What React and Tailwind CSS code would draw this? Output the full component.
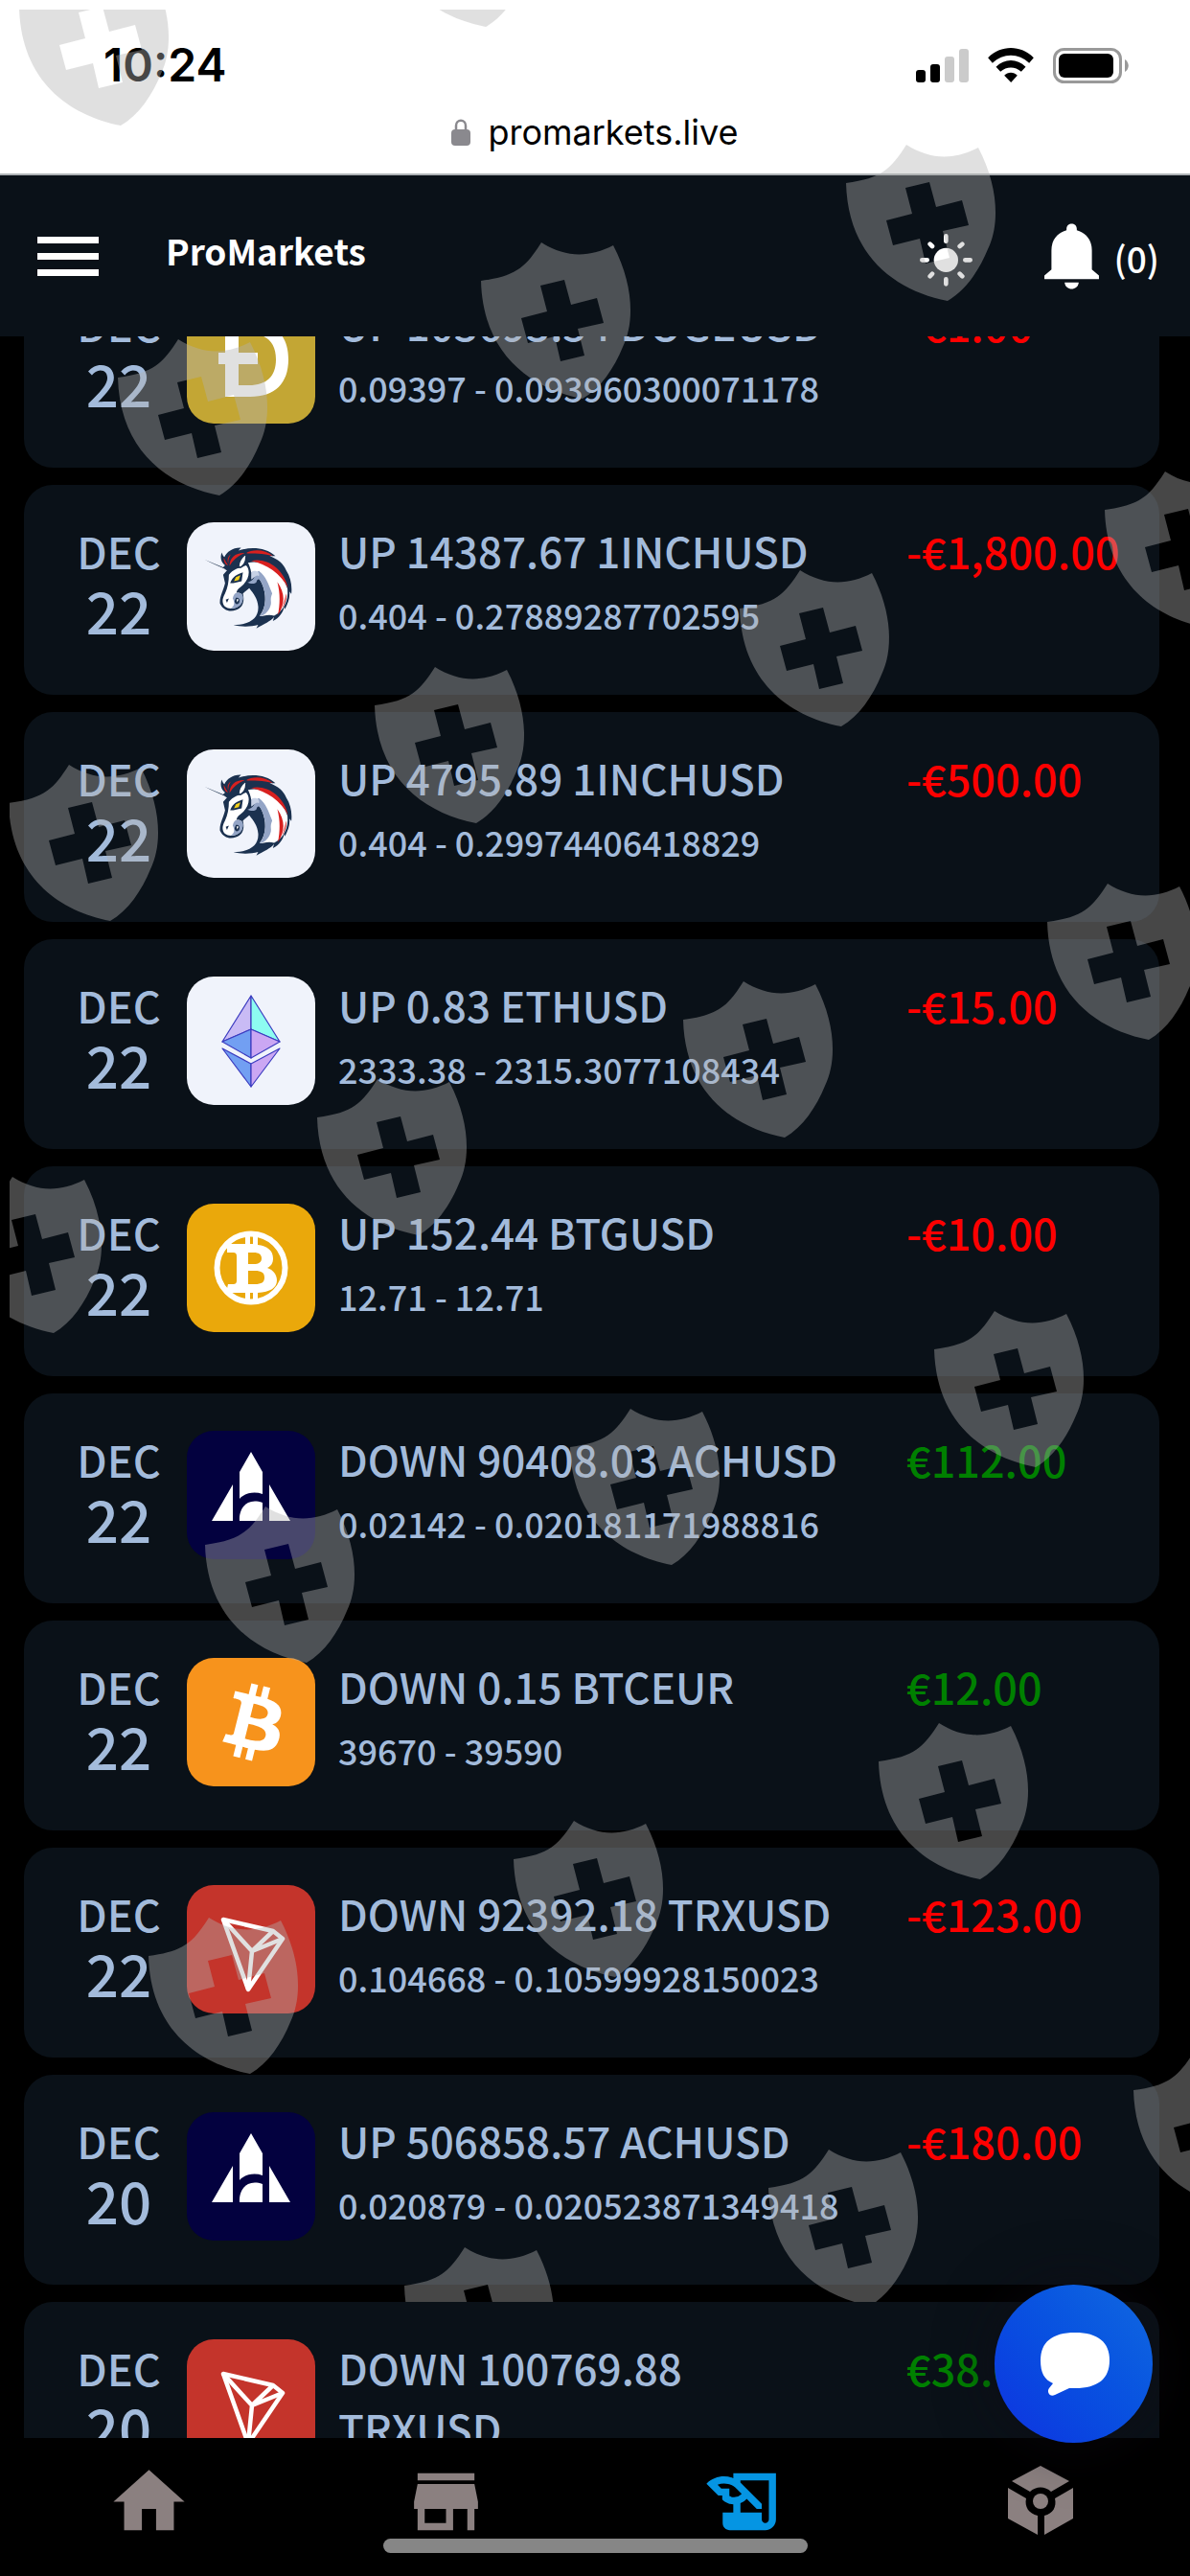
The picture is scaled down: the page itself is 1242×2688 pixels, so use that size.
// src/App.jsx
import React from "react";
import { MdHome, MdStore, MdHistoryEdu } from "react-icons/md";

const trades = [
  { month: "DEC", day: "22", coin: "doge", title: "UP 103693.54 DOGEUSD", range: "0.09397 - 0.093960300071178", amount: "-€1.00" },
  { month: "DEC", day: "22", coin: "1inch", title: "UP 14387.67 1INCHUSD", range: "0.404 - 0.27889287702595", amount: "-€1,800.00" },
  { month: "DEC", day: "22", coin: "1inch", title: "UP 4795.89 1INCHUSD", range: "0.404 - 0.29974406418829", amount: "-€500.00" },
  { month: "DEC", day: "22", coin: "eth", title: "UP 0.83 ETHUSD", range: "2333.38 - 2315.3077108434", amount: "-€15.00" },
  { month: "DEC", day: "22", coin: "btg", title: "UP 152.44 BTGUSD", range: "12.71 - 12.71", amount: "-€10.00" },
  { month: "DEC", day: "22", coin: "ach", title: "DOWN 90408.03 ACHUSD", range: "0.02142 - 0.020181171988816", amount: "€112.00" },
  { month: "DEC", day: "22", coin: "btc", title: "DOWN 0.15 BTCEUR", range: "39670 - 39590", amount: "€12.00" },
  { month: "DEC", day: "22", coin: "trx", title: "DOWN 92392.18 TRXUSD", range: "0.104668 - 0.10599928150023", amount: "-€123.00" },
  { month: "DEC", day: "20", coin: "ach", title: "UP 506858.57 ACHUSD", range: "0.020879 - 0.020523871349418", amount: "-€180.00" },
  { month: "DEC", day: "20", coin: "trx", title: "DOWN 100769.88 TRXUSD", range: "", amount: "€38.00" },
];

const tileColors = {
  doge: "bg-[#c3a634]",
  "1inch": "bg-[#f0f3fb]",
  eth: "bg-[#f0f3fb]",
  btg: "bg-[#eaa80b]",
  ach: "bg-[#03013f]",
  btc: "bg-[#f7931c]",
  trx: "bg-[#c4342b]",
};

function Unicorn() {
  return (
    <svg viewBox="14 15 403 403" className="size-full" aria-hidden="true">
      <path
        fill="#1b314f"
        d="M70 132L128 156L134 150C120 140 118 122 124 110C126 118 128 122 132 124C140 108 158 94 184 95L176 104C210 92 262 92 292 121L274 121C300 130 318 146 326 166C340 188 345 214 342 240L336 232C338 254 332 268 322 288L320 280C316 298 304 316 284 325L288 312C276 326 258 334 232 348L238 337C212 344 182 343 160 337C208 337 240 318 238 280C236 254 224 240 210 222L190 238C196 262 190 284 168 290C150 298 128 292 118 270C116 248 130 226 134 206L128 180L140 166Z"
      />
      <path fill="#fff" d="M86 140L130 160L140 168Z" />
      <path fill="#fff" d="M146 180C158 162 180 158 200 150C214 164 210 190 192 210C182 220 172 224 170 236C188 234 192 246 188 262C182 284 150 292 134 280C122 268 126 252 134 238C142 222 146 200 146 180Z" />
      <path fill="#94a5c6" d="M170 236C190 234 194 248 188 264C182 282 162 288 152 284C168 276 162 262 158 254C160 244 164 238 170 236Z" />
      <path fill="#fff" d="M206 142C262 130 314 172 330 224C334 262 316 294 288 308C268 302 254 310 242 310C266 280 264 238 248 204C238 184 228 172 216 172C214 160 210 150 206 142Z" />
      <path fill="#94a5c6" d="M240 168C264 186 268 206 282 238C272 262 284 262 274 284C262 306 250 308 242 310C262 286 266 244 250 208C244 194 236 186 232 204C226 210 212 208 204 204C214 202 228 194 230 174Z" />
      <path fill="#c8d2e6" d="M216 172C228 162 246 172 240 184C232 176 226 190 216 194Z" />
      <path fill="#d8201f" d="M216 136C262 124 318 158 332 222C310 176 264 146 216 136ZM298 202C324 238 322 274 300 306C306 272 308 240 298 202ZM326 238C328 256 322 270 314 284C320 266 322 252 326 238ZM198 113C222 98 260 100 284 121C252 112 224 114 198 113ZM148 152C148 126 166 110 196 111C174 120 160 132 148 152ZM130 126C134 134 138 142 144 150C134 148 130 138 130 126ZM152 116C142 122 140 134 144 144C144 130 148 122 152 116Z" />
      <path fill="#fff" stroke="#1b314f" strokeWidth="5" d="M176 156C176 138 186 124 200 114C202 134 196 148 184 156Z" />
      <path fill="#1b314f" d="M150 206C156 192 160 182 190 172L186 200L160 206Z" />
      <path fill="#f2cf1a" d="M162 200L168 187L182 181L177 196Z" />
      <path fill="#1b314f" d="M136 258L146 254L140 268ZM168 252C178 250 182 258 178 268C172 276 164 270 164 262Z" />
      <path fill="#fff" d="M170 256L177 257L172 266Z" />
    </svg>
  );
}

function CoinIcon({ coin }) {
  if (coin === "1inch") return <Unicorn />;
  if (coin === "btc") {
    return (
      <svg viewBox="-1 -0.5 33 33" className="size-full" fill="#fff" aria-hidden="true">
        <path d="M23.189 14.02c.314-2.096-1.283-3.223-3.465-3.975l.708-2.84-1.728-.43-.69 2.765c-.454-.114-.92-.22-1.385-.326l.695-2.783L15.596 6l-.708 2.839c-.376-.086-.746-.17-1.104-.26l.002-.009-2.384-.595-.46 1.846s1.283.294 1.256.312c.7.175.826.638.805 1.006l-.806 3.235c.048.012.11.03.18.057l-.183-.045-1.13 4.532c-.086.212-.303.531-.793.41.018.025-1.256-.313-1.256-.313l-.858 1.978 2.25.561c.418.105.828.215 1.231.318l-.715 2.872 1.727.43.708-2.84c.472.127.93.245 1.378.357l-.706 2.828 1.728.43.715-2.866c2.948.558 5.164.333 6.097-2.333.752-2.146-.037-3.385-1.588-4.192 1.13-.26 1.98-1.003 2.207-2.538zm-3.95 5.538c-.533 2.147-4.148.986-5.32.695l.95-3.805c1.172.293 4.929.872 4.37 3.11zm.535-5.569c-.487 1.953-3.495.96-4.47.717l.86-3.45c.975.243 4.118.696 3.61 2.733z" />
      </svg>
    );
  }
  return (
    <svg viewBox="0 0 134 134" className="size-full" aria-hidden="true">
      {coin === "doge" && (
        <path
          fill="#fff"
          fillRule="evenodd"
          d="M40 28H66C92 28 106 42 106 67C106 92 92 106 66 106H40V72H33V60H40ZM54 40V60H74V72H54V94H65C83 94 93 85 93 67C93 49 83 40 65 40Z"
        />
      )}
      {coin === "eth" && (
        <g stroke="#3c3cc0" strokeWidth="1.2" strokeLinejoin="round">
          <path fill="#c9bbf5" d="M67 20L37 68L67 55Z" />
          <path fill="#8dfcf1" d="M67 20L97 68L67 55Z" />
          <path fill="#729ff2" d="M67 55L37 68L67 85Z" />
          <path fill="#cba7f3" d="M67 55L97 68L67 85Z" />
          <path fill="#729ff2" d="M37 75L67 91V115Z" />
          <path fill="#cba7f3" d="M97 75L67 91V115Z" />
        </g>
      )}
      {coin === "btg" && (
        <g>
          <circle cx="67" cy="67" r="35.5" fill="none" stroke="#fff" strokeWidth="6" />
          <path
            fill="#fff"
            fillRule="evenodd"
            d="M42 42H61V34H66V42H69V34H74V43C84 44 90 49 90 57C90 62 88 65 84 67C90 69 94 74 94 80C94 88 87 92 74 93V101H69V93H66V101H61V93H41L43 84H48C51 84 52 83 52 80V55C52 52 51 51 48 51H42ZM64 51V63H70C75 63 78 61 78 57C78 53 75 51 70 51ZM64 70V84H71C78 84 81 82 81 77C81 72 78 70 71 70Z"
          />
        </g>
      )}
      {coin === "ach" && (
        <path
          fill="#fff"
          d="M67 22L79 43V66C70 63 60 65 55 71V43ZM48 56V94H26ZM86 56L108 94H86ZM55 94C54 82 62 69 79 75V94Z"
        />
      )}
      {coin === "trx" && (
        <g fill="none" stroke="#fff" strokeWidth="4.5" strokeLinejoin="round">
          <path d="M38 36L90 48L100 56L64 109Z" />
          <path d="M38 36L68 69L64 109M68 69L90 48M68 69L100 56" />
        </g>
      )}
    </svg>
  );
}

function TradeCard({ trade }) {
  const loss = trade.amount.startsWith("-");
  return (
    <li className="flex h-[219px] items-start rounded-[30px] bg-[#0a1118] pt-[37px] pl-12 text-[45px] font-medium text-[#a3bbdb]">
      <div className="w-[102px] shrink-0 text-center">
        <div className="leading-[63px]">{trade.month}</div>
        <div className="text-[60px] leading-[60px]">{trade.day}</div>
      </div>
      <div className={`mt-0.5 ml-5 size-[134px] shrink-0 overflow-hidden rounded-[28px] ${tileColors[trade.coin]}`}>
        <CoinIcon coin={trade.coin} />
      </div>
      <div className="ml-6 min-w-0 flex-1 pr-16">
        <div className="text-[44px] leading-[63px]">{trade.title}</div>
        <div className="mt-2 text-[36px] leading-[54px]">{trade.range}</div>
      </div>
      <div className={`w-[264px] shrink-0 whitespace-nowrap leading-[63px] ${loss ? "text-[#ff0000]" : "text-[#008000]"}`}>
        {trade.amount}
      </div>
    </li>
  );
}

function StatusBar() {
  return (
    <div className="h-[183px] shrink-0 border-b-2 border-[#aeb2b5] bg-white pt-10 font-['Inter',sans-serif] text-black">
      <div className="flex h-14 items-center justify-between pr-16 pl-[108px]">
        <span className="text-[48px] font-semibold">10:24</span>
        <div className="flex items-center gap-5">
          <svg viewBox="0 0 55 35" className="h-[35px] w-[55px]" aria-hidden="true">
            <rect y="22" width="10" height="13" rx="3" />
            <rect x="15" y="16" width="10" height="19" rx="3" />
            <rect x="30" y="8" width="10" height="27" rx="3" fill="#cbcbcb" />
            <rect x="45" width="10" height="35" rx="3" fill="#cbcbcb" />
          </svg>
          <svg viewBox="305 27 143 108" className="h-9 w-12" aria-hidden="true">
            <path d="M305 58C345 17 408 17 448 58L434 74C401 42 352 42 319 74ZM330 86C357 59 396 59 423 86L409 101C390 84 363 84 344 101ZM356 113C367 101 386 101 397 113L377 135Z" />
          </svg>
          <svg viewBox="0 0 79 37" className="h-[37px] w-[79px]" aria-hidden="true">
            <rect x="1.5" y="1.5" width="69" height="34" rx="10" fill="none" stroke="#999" strokeWidth="3" />
            <rect x="6" y="6" width="57" height="25" rx="6" />
            <path fill="#999" d="M75 12C80 15 80 22 75 25Z" />
          </svg>
        </div>
      </div>
      <div className="mt-3.5 flex h-14 items-center justify-center gap-[18px]">
        <svg viewBox="0 0 20 28" className="h-7 w-5" aria-hidden="true">
          <path fill="none" stroke="#8a898e" strokeWidth="2.5" d="M5 13V7C5 0 15 0 15 7V13" />
          <rect y="11" width="20" height="17" rx="4" fill="#8a898e" />
        </svg>
        <span className="text-[36px]">promarkets.live</span>
      </div>
    </div>
  );
}

function Header() {
  return (
    <header className="flex h-[168px] shrink-0 items-center bg-[#0a1118] pr-8 pl-[39px] text-white">
      <button type="button" aria-label="Menu" className="flex w-16 flex-col gap-2.5">
        <span className="h-[7px] bg-white" />
        <span className="h-[7px] bg-white" />
        <span className="h-[7px] bg-white" />
      </button>
      <h1 className="ml-[70px] pb-3 text-[37px] leading-[48px] font-bold">ProMarkets</h1>
      <button type="button" aria-label="Toggle theme" className="ml-auto pt-2">
        <svg viewBox="89 611 165 165" className="size-[55px]" fill="#fff" aria-hidden="true">
          <circle cx="171" cy="693" r="38" />
          <path
            fill="none"
            stroke="#fff"
            strokeWidth="14"
            strokeLinecap="round"
            d="M171 618V634M171 753V768M96 693H112M231 693H247M121 643L128 650M214 736L222 744M222 643L214 650M128 736L121 744"
          />
        </svg>
      </button>
      <button type="button" className="ml-[75px] flex items-center gap-4 text-[37px] leading-[68px]">
        <svg viewBox="480 584 170 206" className="h-[69px] w-[57px]" fill="#fff" aria-hidden="true">
          <path d="M480 758V747L502 728V668C502 634 522 614 549 606V601C549 580 581 580 581 601V606C608 614 628 634 628 668V728L650 747V758ZM543 768H587C584 795 546 795 543 768Z" />
        </svg>
        <span className="pt-1 font-medium">(0)</span>
      </button>
    </header>
  );
}

function BottomNav() {
  return (
    <nav className="h-36 shrink-0 bg-black text-[#8b8080]">
      <div className="grid grid-cols-4 justify-items-center pt-[22px]">
        <a href="#home" aria-label="Home"><MdHome className="size-[89px]" /></a>
        <a href="#market" aria-label="Market"><MdStore className="size-[89px]" /></a>
        <a href="#history" aria-label="History" className="text-[#0595e3]"><MdHistoryEdu className="size-[89px]" /></a>
        <a href="#assets" aria-label="Assets">
          <svg viewBox="0 0 89 89" className="size-[89px]" fill="currentColor" aria-hidden="true">
            <path d="M44 7L74 23L55 34C49 28 39 28 33 34L14 23ZM10 30L29 41C27 50 32 57 41 59V79L10 62ZM78 30V62L48 79V59C57 57 61 50 59 41Z" />
            <circle cx="44" cy="44" r="8" />
          </svg>
        </a>
      </div>
      <div className="mx-auto -mt-1.5 h-[15px] w-[443px] rounded-full bg-[#868686]" />
    </nav>
  );
}

const marks = [
  [20, -32], [401, -135], [883, 151], [502, 253], [123, 354], [1153, 492], [772, 595], [391, 696],
  [9, 798], [1093, 922], [713, 1024], [331, 1126], [-50, 1228], [975, 1368], [595, 1470], [214, 1572],
  [917, 1798], [536, 1900], [155, 2001], [1183, 2141], [802, 2243], [422, 2345],
];

function Watermark() {
  return (
    <svg className="pointer-events-none absolute top-2.5 left-2.5 h-[2392px] w-[1232px]" viewBox="10 10 1232 2392" fill="#b2b2b2" fillOpacity="0.4" aria-hidden="true">
      {marks.map(([x, y]) => (
        <path
          key={`${x}-${y}`}
          transform={`translate(${x} ${y})`}
          fillRule="evenodd"
          d="M63 0C88 16 113 16 138 3C160 45 160 85 148 109C139 131 125 152 106 163C50 152 2 115 0 40C38 35 47 25 63 0ZM62 45L69 72L42 79L49 105L77 98L83 124L108 118L101 90L128 84L121 58L94 65L87 39Z"
        />
      ))}
    </svg>
  );
}

export default function App() {
  return (
    <div className="relative flex h-screen flex-col overflow-hidden bg-black font-['Noto_Sans_CJK_JP',sans-serif]">
      <StatusBar />
      <Header />
      <main className="min-h-0 flex-1 overflow-hidden pr-8 pl-[25px]">
        {/* list is scrolled so the first trade sits partly under the header */}
        <ul className="-mt-[82px] flex flex-col gap-[18px]">
          {trades.map((t, i) => (
            <TradeCard key={i} trade={t} />
          ))}
        </ul>
      </main>
      <BottomNav />
      <Watermark />
      <button
        type="button"
        aria-label="Open chat"
        className="absolute right-[39px] bottom-[139px] size-[165px] rounded-full bg-linear-to-tr from-[#1030e0] to-[#1268e0] shadow-[0_0_60px_rgba(15,12,20,0.6)]"
      >
        <svg viewBox="0 0 165 165" className="size-full" fill="#fff" aria-hidden="true">
          <path d="M84 50C108 50 120 60 120 79C120 98 108 108 84 108H78L63 115C58 118 54 112 57 108L61 103C52 99 48 92 48 79C48 60 60 50 84 50Z" />
        </svg>
      </button>
    </div>
  );
}
